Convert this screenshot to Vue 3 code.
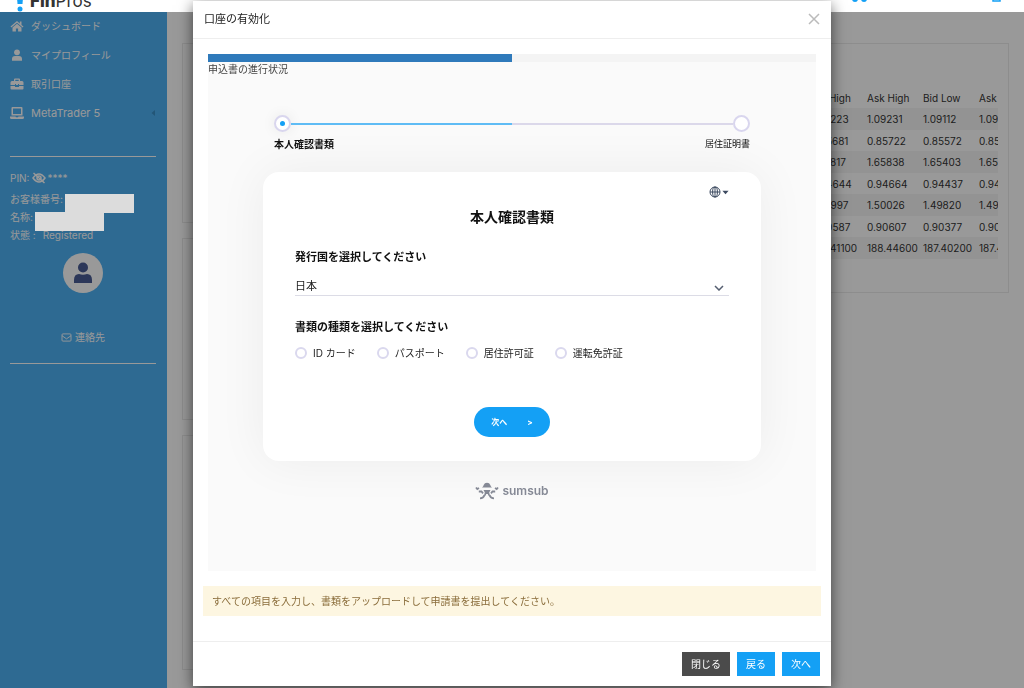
<script setup>
import { ref } from 'vue'

const menu = [
  { label: 'ダッシュボード', icon: 'home' },
  { label: 'マイプロフィール', icon: 'user' },
  { label: '取引口座', icon: 'case' },
  { label: 'MetaTrader 5', icon: 'laptop', sub: true }
]
const columns = ['Bid High', 'Ask High', 'Bid Low', 'Ask Low']
const rates = [
  ['1.09223', '1.09231', '1.09112', '1.09120'],
  ['0.85681', '0.85722', '0.85572', '0.85592'],
  ['1.65817', '1.65838', '1.65403', '1.65424'],
  ['0.94644', '0.94664', '0.94437', '0.94457'],
  ['1.49997', '1.50026', '1.49820', '1.49840'],
  ['0.90587', '0.90607', '0.90377', '0.90397'],
  ['188.41100', '188.44600', '187.40200', '187.43700']
]
const docTypes = ['ID カード', 'パスポート', '居住許可証', '運転免許証']
const country = ref('日本')
const docType = ref('')
const progress = 50
</script>

<template>
  <div class="page">
    <header class="topbar">
      <div class="brand">
        <svg class="brand-mark" viewBox="0 0 12 30" aria-hidden="true">
          <path d="M2 2h8L8.500 22h-5z" />
          <circle cx="6" cy="27" r="2.500" />
        </svg>
        <span><b>Fin</b>Pros</span>
      </div>
      <div class="tools">
        <svg class="tool dots" viewBox="0 0 16 12" aria-hidden="true">
          <circle cx="3" cy="9" r="3" /><circle cx="12" cy="9" r="3" />
        </svg>
        <svg class="tool box" viewBox="0 0 10 12" aria-hidden="true">
          <rect x="1" y="1" width="7" height="10" />
        </svg>
      </div>
    </header>

    <div class="body">
      <aside class="sidebar">
        <nav class="menu">
          <a v-for="item in menu" :key="item.label" href="#" class="menu-item">
            <svg v-if="item.icon === 'home'" viewBox="0 0 14 12" class="menu-icon">
              <path d="M7 1 .5 6.600l.8.9L7 2.700l5.700 4.800.8-.9L11.500 4.900V1.500H9.800v1.900z" />
              <path d="M7 3.800 2.500 7.500V11.500h3.400V8.400h2.200v3.100h3.400V7.500z" />
            </svg>
            <svg v-else-if="item.icon === 'user'" viewBox="0 0 14 12" class="menu-icon">
              <circle cx="7" cy="3.300" r="2.900" />
              <path d="M2 11.800V10q0-3 3-3h4q3 0 3 3v1.800z" />
            </svg>
            <svg v-else-if="item.icon === 'case'" viewBox="0 0 14 12" class="menu-icon">
              <path fill-rule="evenodd" d="M4 3V1.500Q4 .5 5 .5h4q1 0 1 1V3h2q1.500 0 1.500 1.500V7H9V6H8v1H6V6H5v1H.5V4.500Q.5 3 2 3zm1.300 0h3.400V1.800H5.300z" />
              <path d="M.5 8H5v1h4V8h4.500v2.500q0 1-1 1h-11q-1 0-1-1z" />
            </svg>
            <svg v-else viewBox="0 0 14 12" class="menu-icon">
              <path fill-rule="evenodd" d="M2.500 0h9Q12.500 0 12.500 1v7.500h-11V1Q1.500 0 2.500 0zM3 1.500v5.500h8V1.500z" />
              <path d="M0 9.500h5.500l.5.800h2l.5-.8H14v1q0 1.500-1.500 1.500h-11Q0 12 0 10.500z" />
            </svg>
            <span>{{ item.label }}</span>
            <svg v-if="item.sub" viewBox="0 0 6 8" class="menu-arrow"><path d="M5 1 1.500 4 5 7z" /></svg>
          </a>
        </nav>
        <section class="account">
          <div class="line pin">
            <span>PIN:</span>
            <svg viewBox="0 0 14 12" class="eye">
              <path d="M1 6q6-8 12 0-6 8-12 0z" /><circle cx="7" cy="6" r="2" /><path d="m1.500 1 11 10" />
            </svg>
            <span>****</span>
          </div>
          <div class="line"><span>お客様番号:</span><i class="mask"></i></div>
          <div class="line"><span>名称:</span><i class="mask"></i></div>
          <div class="line"><span>状態 :</span><span class="status">Registered</span></div>
          <div class="avatar">
            <svg viewBox="0 0 20 22" aria-hidden="true">
              <circle cx="10" cy="5.500" r="5" />
              <path d="M1 21v-3q0-6 5-6 4 1.600 8 0 5 0 5 6v3z" />
            </svg>
          </div>
          <a href="#" class="contact">
            <svg viewBox="0 0 12 10"><rect x="1" y="1" width="10" height="8" rx="1" /><path d="m1 3 5 3.500L11 3" /></svg>
            <span>連絡先</span>
          </a>
        </section>
      </aside>

      <main class="main">
        <div class="col">
          <div class="panel first"></div>
          <div class="panel second"></div>
          <div class="panel third"></div>
        </div>
        <div class="col">
          <div class="panel rates">
            <div class="scroller">
              <table>
                <thead>
                  <tr><th v-for="c in columns" :key="c">{{ c }}</th></tr>
                </thead>
                <tbody>
                  <tr v-for="row in rates" :key="row[0]">
                    <td v-for="v in row" :key="v">{{ v }}</td>
                  </tr>
                </tbody>
              </table>
            </div>
          </div>
        </div>
      </main>
    </div>

    <div class="backdrop"></div>

    <div class="overlay">
      <div class="modal" role="dialog" aria-labelledby="modal-title">
        <div class="modal-head">
          <h1 id="modal-title">口座の有効化</h1>
          <button class="close" aria-label="閉じる">
            <svg viewBox="0 0 12 12"><path d="m1 1 10 10M11 1 1 11" /></svg>
          </button>
        </div>

        <div class="modal-body">
          <div class="verify">
            <div class="bar"><div class="bar-fill" :style="{ width: progress + '%' }"></div></div>
            <p class="bar-label">申込書の進行状況</p>

            <div class="steps">
              <div class="track">
                <span class="dot active"></span>
                <span class="rail done"></span>
                <span class="rail"></span>
                <span class="dot"></span>
              </div>
              <div class="step-labels">
                <strong>本人確認書類</strong>
                <span>居住証明書</span>
              </div>
            </div>

            <form class="card" @submit.prevent>
              <button type="button" class="lang" aria-label="Language">
                <svg class="globe" viewBox="0 0 12 12">
                  <circle cx="6" cy="6" r="5" /><ellipse cx="6" cy="6" rx="2.400" ry="5" />
                  <path d="M1 6h10M6 1v10" />
                </svg>
                <svg class="caret" viewBox="0 0 8 5"><path d="M.5.500h7L4 4.500z" /></svg>
              </button>
              <h2>本人確認書類</h2>
              <label class="field-label" for="country">発行国を選択してください</label>
              <div class="select">
                <select id="country" v-model="country"><option>日本</option></select>
                <svg viewBox="0 0 10 6"><path d="m1 1 4 4 4-4" /></svg>
              </div>
              <fieldset>
                <legend class="field-label">書類の種類を選択してください</legend>
                <div class="radios">
                  <label v-for="d in docTypes" :key="d">
                    <input v-model="docType" type="radio" name="doc" :value="d" />{{ d }}
                  </label>
                </div>
              </fieldset>
              <button type="submit" class="next"><span>次へ</span><span>&gt;</span></button>
            </form>

            <div class="sumsub">
              <svg viewBox="0 0 24 18" aria-hidden="true">
                <path class="solid" d="M7 5.500Q8.300 4.500 8.700 3 9.500.8 12 .8T15.300 3q.4 1.500 1.700 2.500z" />
                <path class="solid" d="M8.500 8h7l-1.300 2.500.8 3h-1.800l-.4-1.500h-1.600l-.4 1.500H9l.8-3z" />
                <path d="M9.500 13Q8.500 16.300 5 16.300M14.500 13q1 3.300 4.500 3.300M3.800 9.500h2.700l1.500 1.800M20.200 9.500h-2.700L16 11.300M1 5.500l1.300 1.500L4 6M23 5.500l-1.300 1.500L20 6" />
              </svg>
              <span>sumsub</span>
            </div>
          </div>

          <p class="alert">すべての項目を入力し、書類をアップロードして申請書を提出してください。</p>
        </div>

        <div class="modal-foot">
          <button class="btn dark">閉じる</button>
          <button class="btn">戻る</button>
          <button class="btn">次へ</button>
        </div>
      </div>
    </div>
  </div>
</template>

<style>
html,
body {
  background: #fff;
}
</style>

<style scoped>
.page {
  display: flex;
  flex-direction: column;
  min-height: 100vh;
  overflow: hidden;
  font-family: Inter, "Noto Sans CJK JP", sans-serif;
  font-size: 10px;
  line-height: 16px;
  color: #333;
}
.page * {
  box-sizing: border-box;
}
button,
select,
input {
  font: inherit;
  color: inherit;
  margin: 0;
}
button {
  border: 0;
  padding: 0;
  background: none;
}
a {
  color: inherit;
  text-decoration: none;
}
h1,
h2,
p {
  margin: 0;
}

/* Top bar, scrolled mostly out of view */
.topbar {
  position: relative;
  z-index: 2;
  display: flex;
  justify-content: space-between;
  align-items: flex-end;
  height: 48px;
  margin-top: -36px;
  padding: 0 22px 0 14px;
  background: #fff;
}
.brand {
  display: flex;
  align-items: flex-end;
  gap: 4px;
  font-size: 17px;
  line-height: 20px;
}
.brand > span {
  padding-bottom: 1px;
}
.brand b {
  font-weight: 800;
}
.brand-mark {
  width: 12px;
  height: 30px;
  fill: #14a0f5;
}
.tools {
  display: flex;
  gap: 124px;
  padding-bottom: 10px;
}
.tool {
  height: 12px;
}
.dots {
  width: 16px;
  fill: #14a0f5;
}
.box {
  width: 10px;
  fill: none;
  stroke: #14a0f5;
  stroke-width: 1.5;
}

.body {
  display: flex;
  flex: 1;
}
.backdrop {
  position: fixed;
  inset: 0;
  z-index: 1;
  background: rgba(0, 0, 0, 0.4);
}

/* Sidebar */
.sidebar {
  width: 167px;
  flex: none;
  padding: 0 11px 0 10px;
  background: #4eb1f4;
  color: #fff;
}
.menu {
  display: flex;
  flex-direction: column;
  gap: 13px;
  padding: 6px 0 35px;
  border-bottom: 1px solid #fff;
}
.menu-item {
  display: flex;
  align-items: center;
  gap: 7px;
}
.menu-item:last-child {
  font-size: 11px;
}
.menu-icon {
  width: 14px;
  height: 12px;
  fill: currentColor;
}
.menu-arrow {
  width: 6px;
  height: 8px;
  margin-left: auto;
  fill: #3b8fc6;
}
.account {
  padding-top: 12px;
  border-bottom: 1px solid #fff;
}
.line {
  display: flex;
  align-items: center;
  height: 18px;
  gap: 2px;
}
.line.pin {
  margin-bottom: 3px;
}
.eye {
  width: 14px;
  height: 12px;
  fill: none;
  stroke: #fff;
  stroke-width: 1.5;
}
.mask {
  position: relative;
  z-index: 2;
  flex: none;
  width: 69px;
  height: 19px;
  margin-top: 8px;
  background: #dcdcdc;
}
.status {
  margin-left: 5px;
}
.avatar {
  display: grid;
  place-items: center;
  width: 40px;
  height: 40px;
  margin: 9px auto 0;
  border-radius: 50%;
  background: #fff;
}
.avatar svg {
  width: 20px;
  height: 22px;
  fill: #4a5c94;
}
.contact {
  display: flex;
  justify-content: center;
  align-items: center;
  gap: 3px;
  padding: 36px 0 18px;
}
.contact svg {
  width: 11px;
  height: 9px;
  fill: none;
  stroke: #fff;
}

/* Page content */
.main {
  flex: 1;
  display: grid;
  grid-template-columns: minmax(0, 1fr) minmax(0, 1fr);
  gap: 15px;
  padding: 31px 15px 18px;
  background: #fff;
}
.col {
  display: flex;
  flex-direction: column;
  gap: 15px;
}
.panel {
  border: 1px solid #ececec;
}
.first {
  height: 180px;
}
.second {
  height: 182px;
}
.third {
  flex: 1;
}
.rates {
  padding: 43px 10px 33px;
}
.scroller {
  overflow: hidden;
  padding-left: 196px;
}
table {
  width: 224px;
  table-layout: fixed;
  border-collapse: collapse;
  line-height: 16px;
  white-space: nowrap;
}
th,
td {
  height: 21px;
  padding: 0 0 0 1px;
  font-weight: 400;
  text-align: left;
}
tbody tr:nth-child(odd) {
  background: #f6f6f6;
}
tbody tr:nth-child(odd) td {
  height: 22px;
}

/* Modal */
.overlay {
  position: fixed;
  inset: 0;
  z-index: 3;
  padding: 1px 193px;
}
.modal {
  background: #fff;
  box-shadow: 0 4px 14px rgba(0, 0, 0, 0.6);
}
.modal-head {
  display: flex;
  justify-content: space-between;
  align-items: center;
  height: 38px;
  padding: 0 11px 2px;
  border-bottom: 1px solid #eee;
}
.modal-head h1 {
  font-size: 11px;
  font-weight: 400;
  line-height: 18px;
  color: #222;
}
.close svg {
  display: block;
  width: 12px;
  height: 12px;
  fill: none;
  stroke: #bbb;
  stroke-width: 1.5;
}
.modal-body {
  padding: 10px 10px 25px;
}
.verify {
  margin: 5px 5px 15px;
  padding-bottom: 70px;
  background: #fafafa;
}
.bar {
  height: 8px;
  background: #f4f4f4;
}
.bar-fill {
  height: 8px;
  background: #2f7abb;
}
.bar-label {
  line-height: 14px;
  color: #444;
}
.steps {
  padding: 39px 66px 0;
}
.track {
  display: flex;
  align-items: center;
}
.dot {
  display: grid;
  place-items: center;
  width: 17px;
  height: 17px;
  border: 2px solid #d9d6ee;
  border-radius: 50%;
  background: #fff;
}
.active {
  box-shadow: 0 0 14px rgba(0, 0, 0, 0.08);
}
.active::after {
  content: "";
  width: 5px;
  height: 5px;
  border-radius: 50%;
  background: #14a0f5;
}
.rail {
  flex: 1;
  height: 2px;
  background: #dbd8ea;
}
.rail.done {
  background: #5fbcf5;
}
.step-labels {
  display: flex;
  justify-content: space-between;
  padding-top: 4px;
  color: #111;
}
.step-labels span {
  font-size: 9px;
}
.card {
  display: flex;
  flex-direction: column;
  margin: 20px 55px 0;
  padding: 12px 32px 24px;
  border-radius: 16px;
  background: #fff;
  box-shadow: 0 0 50px rgba(0, 0, 0, 0.06);
}
.lang {
  display: flex;
  align-items: center;
  align-self: flex-end;
  gap: 1px;
  height: 16px;
}
.globe {
  width: 12px;
  height: 12px;
  fill: none;
  stroke: #3c4a60;
}
.caret {
  width: 7px;
  height: 5px;
  fill: #3c4a60;
}
.card h2 {
  padding: 7px 0 20px;
  font-size: 14px;
  line-height: 20px;
  text-align: center;
  color: #111;
}
.field-label {
  padding: 0;
  font-size: 11px;
  font-weight: 700;
  line-height: 20px;
  color: #111;
}
.select {
  position: relative;
  margin-top: 10px;
  border-bottom: 1px solid #dcdce6;
}
.select select {
  display: block;
  width: 100%;
  height: 18px;
  padding: 0;
  border: 0;
  appearance: none;
  background: none;
  font-size: 11px;
  color: #222;
}
.select svg {
  position: absolute;
  right: 5px;
  top: 8px;
  width: 10px;
  height: 6px;
  fill: none;
  stroke: #555e70;
  stroke-width: 1.5;
}
fieldset {
  margin: 21px 0 0;
  padding: 0;
  border: 0;
}
.radios {
  display: flex;
  gap: 21px;
  padding-top: 8px;
  color: #222;
}
.radios label {
  display: flex;
  align-items: center;
  gap: 7px;
}
.radios input {
  width: 12px;
  height: 12px;
  margin-right: -1px;
  appearance: none;
  border: 2px solid #dad8ee;
  border-radius: 50%;
}
.radios input:checked {
  border-color: #14a0f5;
}
.next {
  display: flex;
  justify-content: center;
  align-items: center;
  align-self: center;
  gap: 20px;
  height: 30px;
  margin-top: 46px;
  padding: 0 17px;
  border-radius: 15px;
  background: #14a0f5;
  color: #fff;
  font-size: 8px;
  font-weight: 700;
}
.sumsub {
  display: flex;
  justify-content: center;
  align-items: center;
  gap: 3px;
  padding-top: 20px;
  line-height: 20px;
  font-size: 12px;
  font-weight: 600;
  color: #858995;
}
.sumsub svg {
  width: 24px;
  height: 18px;
  fill: none;
  stroke: #858995;
  stroke-width: 1.8;
}
.sumsub .solid {
  fill: #858995;
  stroke: none;
}
.alert {
  padding: 7px 9px;
  background: #fdf6e1;
  color: #8a6d3b;
}
.modal-foot {
  display: flex;
  justify-content: flex-end;
  gap: 7px;
  padding: 10px 11px 10px 10px;
  border-top: 1px solid #eee;
}
.btn {
  height: 24px;
  padding: 0 9px;
  background: #14a0f5;
  color: #fff;
}
.btn.dark {
  background: #4b4b4b;
}
</style>
